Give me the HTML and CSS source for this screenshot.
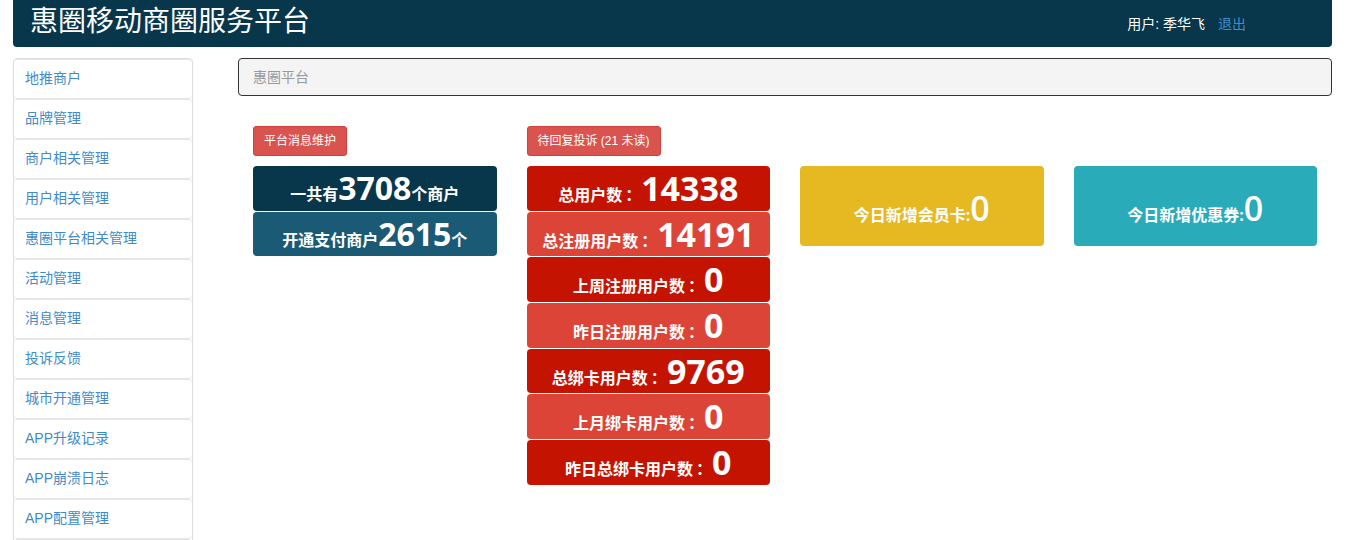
FILE: index.html
```html
<!DOCTYPE html>
<html lang="zh-CN">
<head>
<meta charset="utf-8">
<title>惠圈移动商圈服务平台</title>
<link rel="stylesheet" href="styles.css">
</head>
<body>
<div class="page">
  <header class="topbar">
    <h1 class="brand">惠圈移动商圈服务平台</h1>
    <div class="user">用户: 季华飞<a class="logout" href="#">退出</a></div>
  </header>
  <div class="layout">
    <nav class="sidebar">
      <a class="nav-item" href="#">地推商户</a>
      <a class="nav-item" href="#">品牌管理</a>
      <a class="nav-item" href="#">商户相关管理</a>
      <a class="nav-item" href="#">用户相关管理</a>
      <a class="nav-item" href="#">惠圈平台相关管理</a>
      <a class="nav-item" href="#">活动管理</a>
      <a class="nav-item" href="#">消息管理</a>
      <a class="nav-item" href="#">投诉反馈</a>
      <a class="nav-item" href="#">城市开通管理</a>
      <a class="nav-item" href="#">APP升级记录</a>
      <a class="nav-item" href="#">APP崩溃日志</a>
      <a class="nav-item" href="#">APP配置管理</a>
      <span class="nav-item nav-empty"></span>
    </nav>
    <main class="main">
      <div class="crumb">惠圈平台</div>
      <div class="grid">
        <div class="col">
          <span class="btn">平台消息维护</span>
          <div class="stack">
            <div class="card navy">一共有<span class="num n32">3708</span>个商户</div>
            <div class="card steel">开通支付商户<span class="num n32">2615</span>个</div>
          </div>
        </div>
        <div class="col">
          <span class="btn">待回复投诉 (21 未读)</span>
          <div class="stack">
            <div class="card red">总用户数<span class="colon">：</span><span class="num">14338</span></div>
            <div class="card coral">总注册用户数<span class="colon">：</span><span class="num">14191</span></div>
            <div class="card red">上周注册用户数<span class="colon">：</span><span class="num">0</span></div>
            <div class="card coral">昨日注册用户数<span class="colon">：</span><span class="num">0</span></div>
            <div class="card red">总绑卡用户数<span class="colon">：</span><span class="num">9769</span></div>
            <div class="card coral">上月绑卡用户数<span class="colon">：</span><span class="num">0</span></div>
            <div class="card red">昨日总绑卡用户数<span class="colon">：</span><span class="num">0</span></div>
          </div>
        </div>
        <div class="col col-offset">
          <div class="card tall yellow">今日新增会员卡:<span class="num light">0</span></div>
        </div>
        <div class="col col-offset">
          <div class="card tall teal">今日新增优惠券:<span class="num light">0</span></div>
        </div>
      </div>
    </main>
  </div>
</div>
</body>
</html>
```
FILE: styles.css
```css
body {
  margin: 0;
  background: #fff;
  font-family: "Liberation Sans", "Noto Sans CJK SC", sans-serif;
}

.page {
  padding: 0 15px 0 13px;
}

.topbar {
  height: 47px;
  box-sizing: border-box;
  background: #08364a;
  border-radius: 0 0 4px 4px;
  display: flex;
  align-items: flex-start;
  justify-content: space-between;
  padding: 0 86px 0 17px;
  color: #fff;
}

.brand {
  margin: 0;
  padding-top: 5px;
  font-family: "Noto Sans CJK SC", sans-serif;
  font-size: 28px;
  font-weight: normal;
  line-height: 28px;
}

.user {
  padding-top: 16px;
  font-size: 14px;
  line-height: 16px;
}

.logout {
  margin-left: 13px;
  color: #428bca;
  text-decoration: none;
}

.layout {
  display: flex;
  align-items: flex-start;
  gap: 45px;
  margin-top: 11px;
}

.sidebar {
  width: 180px;
  flex: none;
  box-sizing: border-box;
  border: 1px solid #ddd;
  border-radius: 4px;
}

.nav-item {
  display: block;
  height: 40px;
  box-sizing: border-box;
  border-top: 1px solid #e6e6e6;
  border-bottom: 1px solid #e6e6e6;
  border-radius: 4px;
  padding-left: 11px;
  font-size: 14px;
  line-height: 37px;
  color: #428bca;
  text-decoration: none;
}

.main {
  flex: 1;
  min-width: 0;
}

.crumb {
  height: 38px;
  box-sizing: border-box;
  border: 1px solid #333;
  border-radius: 4px;
  background: #f4f4f4;
  padding-left: 14px;
  font-size: 14px;
  line-height: 36px;
  color: #999;
}

.grid {
  display: grid;
  grid-template-columns: repeat(4, 1fr);
  margin-top: 30px;
}

.col {
  padding: 0 15px;
}

.col-offset {
  padding-top: 40px;
}

.btn {
  display: inline-block;
  margin-bottom: 10px;
  padding: 5px 10px;
  border: 1px solid #d43f3a;
  border-radius: 3px;
  background: #d9534f;
  color: #fff;
  font-size: 12px;
  line-height: 18px;
}

.stack {
  display: flex;
  flex-direction: column;
  gap: 1px;
}

.card {
  height: 44.7px;
  box-sizing: border-box;
  padding-top: 18px;
  border-radius: 4px;
  color: #fff;
  text-align: center;
  font-family: "Open Sans", "Noto Sans CJK SC", sans-serif;
  font-size: 16px;
  font-weight: bold;
  line-height: 20px;
  white-space: nowrap;
}

.card.tall {
  height: 80px;
  padding-top: 39px;
}

.colon {
  padding-left: 3px;
  font-family: "Noto Sans CJK SC", sans-serif;
}

.num {
  font-size: 34px;
  line-height: 0;
}

.num.n32 {
  font-size: 32px;
}

.num.light {
  font-weight: 600;
}

.navy { background: #08364a; }
.steel { background: #1b5a75; }
.red { background: #c41300; }
.coral { background: #db4437; }
.yellow { background: #e6b822; }
.teal { background: #29abb9; }
```
